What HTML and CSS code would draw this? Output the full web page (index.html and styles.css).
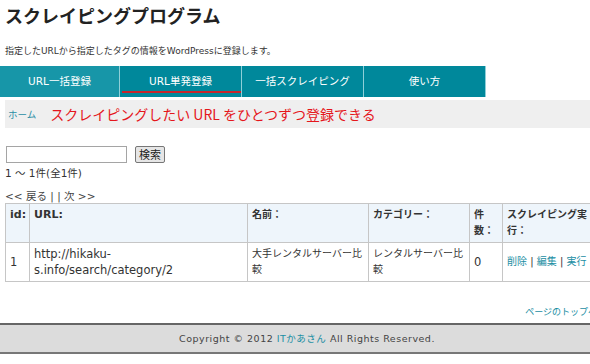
FILE: index.html
```html
<!DOCTYPE html>
<html lang="ja">
<head>
<meta charset="utf-8">
<title>スクレイピングプログラム</title>
<link rel="stylesheet" href="styles.css">
</head>
<body>
<div class="page">
  <header class="head">
    <h1 class="title">スクレイピングプログラム</h1>
    <p class="desc">指定したURLから指定したタグの情報をWordPressに登録します。</p>
  </header>
  <nav class="nav">
    <a class="tab tab-first" href="#">URL一括登録</a>
    <a class="tab tab-active" href="#">URL単発登録</a>
    <a class="tab" href="#">一括スクレイピング</a>
    <a class="tab" href="#">使い方</a>
  </nav>
  <div class="crumb">
    <a class="crumb-home" href="#">ホーム</a>
    <span class="crumb-lead">スクレイピングしたい URL をひとつずつ登録できる</span>
  </div>
  <main class="main">
    <form class="search">
      <input class="search-input" type="text">
      <button class="search-btn" type="button">検索</button>
    </form>
    <div class="count">1 〜 1件(全1件)</div>
    <div class="pager">&lt;&lt; 戻る | | 次 &gt;&gt;</div>
    <table class="list">
      <colgroup>
        <col class="c-id"><col class="c-url"><col class="c-name"><col class="c-cat"><col class="c-num"><col class="c-act">
      </colgroup>
      <thead>
        <tr>
          <th class="latin nowrap">id:</th>
          <th class="latin">URL:</th>
          <th>名前：</th>
          <th>カテゴリー：</th>
          <th>件数：</th>
          <th>スクレイピング実行：</th>
        </tr>
      </thead>
      <tbody>
        <tr>
          <td class="latin">1</td>
          <td class="latin">http://hikaku-s.info/search/category/2</td>
          <td>大手レンタルサーバー比較</td>
          <td>レンタルサーバー比較</td>
          <td class="latin">0</td>
          <td class="nowrap"><a href="#">削除</a> | <a href="#">編集</a> | <a href="#">実行</a></td>
        </tr>
      </tbody>
    </table>
    <div class="totop"><a href="#">ページのトップへ</a></div>
  </main>
  <footer class="foot">Copyright © 2012 <a href="#">ITかあさん</a> All Rights Reserved.</footer>
</div>
</body>
</html>
```

FILE: styles.css
```css
html, body {
  margin: 0;
  padding: 0;
  overflow: hidden;
  background: #fff;
}
body {
  font-family: "DejaVu Sans", "Noto Sans CJK JP", sans-serif;
  color: #333;
  font-size: 10px;
}
a { color: #1b8ea3; text-decoration: none; }
.page { width: 606px; }
.head { padding: 0 5px; }
.title {
  margin: 0;
  padding-top: 3px;
  font-family: "Noto Sans CJK JP", sans-serif;
  font-weight: bold;
  font-size: 18px;
  line-height: 24px;
  color: #222;
}
.desc {
  margin: 0;
  padding-top: 18px;
  height: 21px;
  font-size: 9px;
  line-height: 12px;
  color: #333;
}
.nav {
  display: flex;
  height: 31px;
  width: 488px;
}
.tab {
  width: 121px;
  height: 31px;
  border-right: 1px solid #8fcfd8;
  background: #00889b;
  color: #fff;
  font-size: 10.5px;
  line-height: 31px;
  text-align: center;
  position: relative;
}
.tab-first { width: 119px; background: #1796a8; }
.tab-active::after {
  content: "";
  position: absolute;
  left: 2px;
  right: 0;
  bottom: 4px;
  height: 2px;
  background: #c8252b;
}
.crumb {
  margin: 3px 0 0 5px;
  height: 28px;
  background: #efefef;
  display: flex;
  align-items: center;
  gap: 14px;
  padding-left: 3px;
}
.crumb-home { font-size: 9.5px; color: #2a8ea5; }
.crumb-lead {
  font-family: "Noto Sans CJK JP", sans-serif;
  font-size: 14px;
  color: #e5161c;
}
.main { padding: 0 5px; }
.search {
  display: flex;
  gap: 8px;
  margin-top: 18px;
  height: 16px;
}
.search-input {
  box-sizing: border-box;
  width: 121px;
  height: 17px;
  margin: 0 0 0 1px;
  border: 1px solid #a5a5a5;
  padding: 0;
}
.search-btn {
  box-sizing: border-box;
  height: 17px;
  padding: 0 3px;
  font-family: "Noto Sans CJK JP", sans-serif;
  font-size: 11px;
  line-height: 13px;
  color: #222;
  background: #e6e6e6;
  border: 1px solid #777;
  border-radius: 2px;
}
.count { margin-top: 4px; line-height: 14px; font-size: 10.5px; }
.pager { margin-top: 9px; line-height: 14px; font-size: 10.5px; color: #444; }
.list {
  border-collapse: collapse;
  table-layout: fixed;
  width: 593px;
  margin-top: 0;
}
.c-id { width: 24px; }
.c-url { width: 218px; }
.c-name { width: 121px; }
.c-cat { width: 101px; }
.c-num { width: 33px; }
.c-act { width: 96px; }
.list th, .list td {
  border: 1px solid #c6c6c6;
  padding: 3px 4px;
  line-height: 16px;
  text-align: left;
  vertical-align: top;
  font-size: 10px;
  overflow-wrap: anywhere;
}
.list .latin { font-size: 11.5px; }
.list th.latin { font-size: 11px; }
.list .nowrap { white-space: nowrap; overflow-wrap: normal; }
.list th {
  background: #eef5fb;
  font-weight: bold;
  height: 32px;
}
.list td { vertical-align: middle; height: 32px; }
.totop {
  text-align: right;
  margin-top: 24px;
  margin-right: 4px;
  font-size: 9px;
  line-height: 12px;
  white-space: nowrap;
}
.foot {
  margin-top: 5px;
  height: 27px;
  border-top: 2px solid #666;
  border-bottom: 2px solid #777;
  background: #dcdcdc;
  text-align: center;
  line-height: 27px;
  font-size: 9.5px;
  letter-spacing: 0.5px;
  padding-left: 8px;
  color: #444;
}
```
